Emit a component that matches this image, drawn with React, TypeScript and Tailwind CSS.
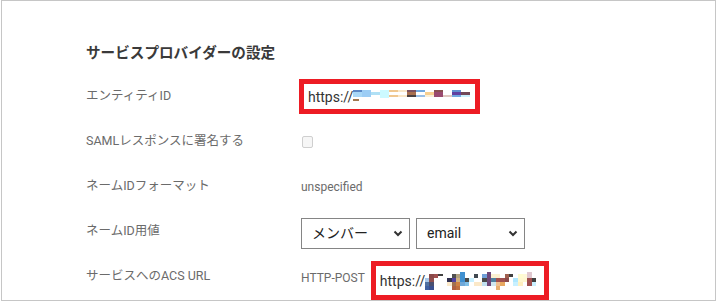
import React from "react";

type R = [number, number, number, number, string];

const mosaic1: R[] = [
  [0, 1, 9, 2, "#5b87c5"],
  [0, 3, 9, 5, "#a8d8f8"],
  [0, 10, 6, 2, "#a07850"],
  [9, 1, 9, 7, "#9ccdf5"],
  [18, 3, 9, 3, "#b0e0f5"],
  [27, 1, 9, 8, "#ccfaff"],
  [36, 1, 9, 2, "#f0c890"],
  [36, 6, 9, 2, "#f0c890"],
  [45, 1, 9, 2, "#fbe8c8"],
  [45, 6, 9, 2, "#fbe8c8"],
  [54, 1, 9, 2, "#7a5060"],
  [54, 3, 9, 3, "#a87050"],
  [54, 6, 9, 2, "#4a4040"],
  [63, 1, 9, 2, "#70a8e0"],
  [63, 6, 9, 2, "#9ac0e8"],
  [72, 3, 9, 3, "#f8d090"],
  [72, 6, 9, 2, "#fbf0d8"],
  [81, 1, 9, 2, "#8a5050"],
  [81, 3, 9, 5, "#9a4a70"],
  [90, 6, 9, 2, "#e0c8c0"],
  [99, 1, 9, 2, "#6090d0"],
  [99, 3, 9, 3, "#6040a0"],
  [99, 6, 9, 2, "#70a8e0"],
  [108, 3, 9, 3, "#704858"],
  [108, 6, 9, 2, "#c8f0ff"],
];

const mosaic2: R[] = [
  [0, 4, 4, 4, "#a8c8e8"],
  [0, 8, 4, 4, "#5070a0"],
  [0, 12, 4, 4, "#4060a0"],
  [4, 0, 5, 4, "#8a4a4a"],
  [4, 4, 5, 4, "#905050"],
  [4, 8, 5, 4, "#4a5070"],
  [4, 12, 5, 4, "#3a5090"],
  [9, 0, 4, 4, "#a05050"],
  [13, 0, 5, 2, "#404040"],
  [22, 4, 5, 4, "#303050"],
  [22, 8, 5, 4, "#fbe8c8"],
  [27, 0, 4, 4, "#505050"],
  [27, 4, 4, 4, "#5040a0"],
  [27, 8, 4, 4, "#a07050"],
  [27, 12, 4, 4, "#b06040"],
  [31, 0, 4, 4, "#b0a080"],
  [31, 4, 4, 4, "#d0b080"],
  [31, 8, 4, 4, "#d08040"],
  [31, 12, 4, 4, "#c07040"],
  [35, -2, 5, 10, "#4090d0"],
  [35, 8, 5, 4, "#70a8d8"],
  [40, 4, 4, 4, "#4a4a4a"],
  [40, 8, 4, 4, "#80c0e8"],
  [44, 4, 5, 4, "#c8f0ff"],
  [49, 0, 4, 4, "#404850"],
  [49, 8, 4, 4, "#fbe8c8"],
  [53, 8, 4, 4, "#fbe8c8"],
  [57, 0, 5, 4, "#70a0d8"],
  [57, 4, 5, 4, "#4a4a4a"],
  [57, 8, 5, 4, "#c0e0f0"],
  [62, -2, 4, 14, "#704878"],
  [66, 0, 5, 4, "#fbf0d0"],
  [66, 4, 5, 4, "#5080a0"],
  [66, 8, 5, 4, "#d0e8f0"],
  [71, 0, 4, 4, "#fbf0d0"],
  [71, 4, 4, 4, "#a05050"],
  [71, 8, 4, 4, "#f0c090"],
  [71, 12, 4, 4, "#e8b070"],
  [75, 4, 5, 4, "#a05050"],
  [75, 8, 5, 4, "#e8a860"],
  [80, 0, 4, 4, "#a06050"],
  [80, 4, 4, 4, "#8a4a4a"],
  [84, 0, 4, 3, "#404040"],
  [88, 4, 5, 4, "#b0e8ff"],
  [88, 8, 5, 4, "#c8f0ff"],
  [93, 0, 5, 4, "#fffcd0"],
  [93, 4, 5, 4, "#fff8d0"],
  [93, 8, 5, 4, "#fff0c0"],
  [98, 0, 4, 4, "#fff8d8"],
  [98, 4, 4, 4, "#fff8d0"],
  [102, -2, 5, 6, "#e0c8d0"],
  [102, 4, 5, 8, "#a05050"],
  [107, 4, 4, 4, "#404040"],
  [107, 8, 4, 4, "#c8f0ff"],
];

function Mosaic({ rects, w, h, oy }: { rects: R[]; w: number; h: number; oy: number }) {
  return (
    <svg width={w} height={h} viewBox={`0 ${-oy} ${w} ${h}`} className="block shrink-0">
      {rects.map(([x, y, rw, rh, c], i) => (
        <rect key={i} x={x} y={y} width={rw} height={rh} fill={c} />
      ))}
    </svg>
  );
}

function Chevron() {
  return (
    <svg width="10" height="7" viewBox="0 0 10 7" className="block">
      <path d="M1.5 1.5 L5 5 L8.5 1.5" fill="none" stroke="#333" strokeWidth="2" />
    </svg>
  );
}

function Select({ label }: { label: string }) {
  return (
    <div className="flex h-[31px] w-[109px] items-center justify-between border border-[#858585] bg-white pl-[10px] pr-[6px] text-[14px] text-[#222]">
      <span>{label}</span>
      <Chevron />
    </div>
  );
}

const labelCls = "w-[215px] shrink-0 text-[12.5px] text-[#6b6b6b]";

export default function App() {
  return (
    <div className="h-[302px] w-[718px] bg-white font-[Roboto,'Noto_Sans_CJK_JP',sans-serif]">
      <div className="ml-[1px] h-[301px] w-[715px] overflow-hidden border border-[#c6c6c6] pl-[84px] pt-[42px]">
        <div className="text-[14.6px] font-bold leading-[20px] text-[#3a3a3a]">サービスプロバイダーの設定</div>
        <div className="mt-[11px] flex flex-col">
          <div className="flex h-[45px] items-center">
            <div className={labelCls}>エンティティID</div>
            <div className="-ml-[2px] flex h-[35px] w-[181px] items-center border-[5px] border-[#ed1c24] pl-[4px]">
              <span className="text-[14px] leading-[18px] text-[#333]">https://</span>
              <Mosaic rects={mosaic1} w={118} h={14} oy={-1} />
            </div>
          </div>
          <div className="flex h-[45px] items-center">
            <div className={labelCls}>SAMLレスポンスに署名する</div>
            <div className="ml-[1px] h-[12px] w-[11px] rounded-[2px] border border-[#cfcfcf] bg-[#f6f6f6]" />
          </div>
          <div className="flex h-[45px] items-center">
            <div className={labelCls}>ネームIDフォーマット</div>
            <div className="text-[12px] text-[#6b6b6b]">unspecified</div>
          </div>
          <div className="flex h-[45px] items-center">
            <div className={labelCls}>ネームID用値</div>
            <div className="mt-[3px] flex gap-[6px]">
              <Select label="メンバー" />
              <Select label="email" />
            </div>
          </div>
          <div className="flex h-[45px] items-center">
            <div className={labelCls}>サービスへのACS URL</div>
            <div className="mt-[3px] text-[12px] text-[#6b6b6b]">HTTP-POST</div>
            <div className="ml-[6px] mt-[8px] flex h-[39px] w-[178px] shrink-0 items-center border-[5px] border-[#ed1c24] pl-[4px]">
              <span className="text-[14px] leading-[18px] text-[#333]">https://</span>
              <Mosaic rects={mosaic2} w={113} h={18} oy={2} />
            </div>
          </div>
        </div>
      </div>
    </div>
  );
}
